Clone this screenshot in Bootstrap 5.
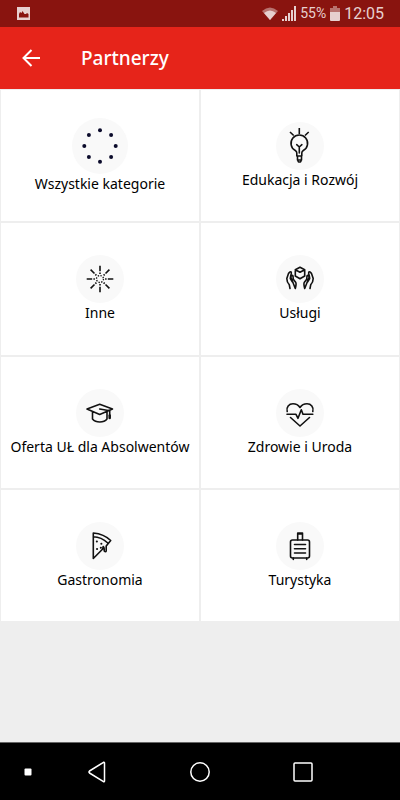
<!DOCTYPE html>
<html lang="pl">
<head>
<meta charset="utf-8">
<meta name="viewport" content="width=device-width, initial-scale=1">
<title>Partnerzy</title>
<link href="https://cdn.jsdelivr.net/npm/bootstrap@5.3.0/dist/css/bootstrap.min.css" rel="stylesheet">
<style>
body { background: #eee; font-family: "Noto Sans", "Open Sans", sans-serif; }
svg { display: block; flex: none; }
.status { background: #89140f; color: #e7d0cf; height: 27px; font: 14px/27px Roboto, sans-serif; padding: 0 16px; }
.status .clock { font-size: 16px; }
.topbar { background: #e6241a; height: 62px; padding: 0 18px; }
.topbar h1 { font-size: 19px; line-height: 28px; font-weight: 500; margin-left: 37px; }
.tile-cell { aspect-ratio: 3 / 2; padding: 1px; }
.tile { background: #fff; color: #000; font-size: 14px; line-height: 19px; }
.tile svg { fill: none; stroke: #111; stroke-width: 1.6; stroke-linecap: round; stroke-linejoin: round; }
.disc { fill: #f9f9f9; stroke: none; }
.solid { fill: #0b0b2b; stroke: none; }
.sysnav { background: #000; border-top: 1px solid #666; height: 58px; padding: 0 46px 0 10px; }
.sysnav .edge { width: 36px; }
.sysnav svg { fill: none; stroke: #fff; stroke-width: 1.5; stroke-linejoin: round; }
</style>
<script src="https://cdn.jsdelivr.net/npm/bootstrap@5.3.0/dist/js/bootstrap.bundle.min.js"></script>
</head>
<body class="d-flex flex-column min-vh-100">
<div class="status d-flex align-items-center">
  <svg width="14" height="14" viewBox="0 0 14 14" class="me-auto"><path fill="#e7d0cf" fill-rule="evenodd" d="M1 0h13v13H1zM3 10.500h9.500V7l-1.500-1-1 1-1.500 0-2-3-1 2L4 5 3 7z"/></svg>
  <svg width="16" height="14" viewBox="0 0 16 14"><path fill="#b8736f" d="M0 4Q8-3 16 4L8 13z"/><path fill="#e7d0cf" d="M2 6Q8 1 14 6L8 13z"/></svg>
  <svg class="ms-1" width="14" height="15" viewBox="0 0 14 15" fill="#e7d0cf"><path d="M0 15v-2h2v2zM3 15v-5h2v5zM6 15V7h2v8zM9 15V4h2v11zM12 15V0h2v15z"/></svg>
  <span class="ms-1 me-1">55%</span>
  <svg width="10" height="15" viewBox="0 0 10 15"><path fill="#b8736f" d="M3 0h4v2h3v5H0V2h3z"/><path fill="#e7d0cf" d="M0 6h10v8q0 1-1 1H1q-1 0-1-1z"/></svg>
  <span class="clock ms-1">12:05</span>
</div>
<header class="topbar d-flex align-items-center text-white">
  <button type="button" class="btn p-0 border-0 text-white" aria-label="Wstecz">
    <svg width="26" height="26" viewBox="0 0 26 26" fill="none" stroke="currentColor" stroke-width="2"><path d="M22 13H6M13.500 5 5.500 13l8 8"/></svg>
  </button>
  <h1 class="mb-0">Partnerzy</h1>
</header>
<main class="flex-grow-1">
  <div class="row row-cols-2 g-0">
    <div class="col tile-cell"><a href="#" class="tile d-flex flex-column align-items-center justify-content-center h-100 text-decoration-none">
      <svg width="56" height="56" viewBox="0 0 56 56"><circle class="disc" cx="28" cy="28" r="28"/><g class="solid"><circle cx="28" cy="12.300" r="2"/><circle cx="39.100" cy="16.900" r="2"/><circle cx="43.700" cy="28" r="2"/><circle cx="39.100" cy="39.100" r="2"/><circle cx="28" cy="43.700" r="2"/><circle cx="16.900" cy="39.100" r="2"/><circle cx="12.300" cy="28" r="2"/><circle cx="16.900" cy="16.900" r="2"/></g></svg>
      <span>Wszystkie kategorie</span></a></div>
    <div class="col tile-cell"><a href="#" class="tile d-flex flex-column align-items-center justify-content-center h-100 text-decoration-none">
      <svg width="48" height="48" viewBox="0 0 48 48"><circle class="disc" cx="24" cy="24" r="24"/><path stroke-linecap="butt" d="M23.300 6v6M14 10l3.700 3.500M32.700 10 29 13.500"/><path d="M20.800 34v-3q0-1.500-1.500-2.500a8.300 8.300 0 1 1 8 0q-1.500 1-1.500 2.500v3zM21.500 34v4l1 2h2l1-2v-4M21.500 38h4M23.300 31v-6l-2.600-2.300M23.300 25l2.600-2.300"/></svg>
      <span>Edukacja i Rozwój</span></a></div>
    <div class="col tile-cell"><a href="#" class="tile d-flex flex-column align-items-center justify-content-center h-100 text-decoration-none">
      <svg width="48" height="48" viewBox="0 0 48 48"><circle class="disc" cx="24" cy="24" r="24"/><g stroke-linecap="butt"><path stroke-dasharray="5.500 1.200 1.500 9" d="M24 10.700v10M24 37.300v-10M10.700 24h10M37.300 24h-10M14.600 14.600l7 7M33.400 14.600l-7 7M14.600 33.400l7-7M33.400 33.400l-7-7"/><circle cx="24" cy="24" r="3.500" stroke-dasharray="1.400 1.350" stroke-width="1.300"/></g></svg>
      <span>Inne</span></a></div>
    <div class="col tile-cell"><a href="#" class="tile d-flex flex-column align-items-center justify-content-center h-100 text-decoration-none">
      <svg width="48" height="48" viewBox="0 0 48 48"><circle class="disc" cx="24" cy="24" r="24"/><path d="M24 12.300l4.700 2.500v6.200L24 23.700 19.300 21v-6.200zM19.300 14.800 24 17.300l4.700-2.500"/><path id="hand" d="M14 33.500l-.7-3.700Q10.800 27 10.800 23.500l1.700-5Q14 16 15.300 17.200q.3.800-.5 3.300l-.5 3 2.200 3.500M14.800 22q1.200-2.500 2.200-1l.3 3.300 2.500 3.200q.7 1.500-.5 6z"/><use href="#hand" transform="translate(48 0) scale(-1 1)"/></svg>
      <span>Usługi</span></a></div>
    <div class="col tile-cell"><a href="#" class="tile d-flex flex-column align-items-center justify-content-center h-100 text-decoration-none">
      <svg width="48" height="48" viewBox="0 0 48 48"><circle class="disc" cx="24" cy="24" r="24"/><path d="M11 20l12.700-4.700L36.500 20l-12.800 5.500zM16.500 22.700V30q2.500 3 7.300 3t7.200-3v-7M23.700 20l10 1.800V27"/><path d="M33.700 26.500v2.500" stroke-width="2.500"/></svg>
      <span>Oferta UŁ dla Absolwentów</span></a></div>
    <div class="col tile-cell"><a href="#" class="tile d-flex flex-column align-items-center justify-content-center h-100 text-decoration-none">
      <svg width="48" height="48" viewBox="0 0 48 48"><circle class="disc" cx="24" cy="24" r="24"/><path d="M11.200 22.500C10 18 13 14.800 17 14.800q4.500 0 7 3.700 2.500-3.700 7-3.700c4 0 7 3.200 5.800 7.700M11 25.300h9l2 4 3.300-8.500L27 25.300h9.800M14.500 28.500 24 37l9.500-8.500"/></svg>
      <span>Zdrowie i Uroda</span></a></div>
    <div class="col tile-cell"><a href="#" class="tile d-flex flex-column align-items-center justify-content-center h-100 text-decoration-none">
      <svg width="48" height="48" viewBox="0 0 48 48"><circle class="disc" cx="24" cy="24" r="24"/><path d="M17.300 11v25.500l9.400-9.500.5-2.500q1 .5 1 2.500v2q1.500 1.500 2 0v-5l4.500-5.500Q28 12 17.300 11zM17.300 14.800q8 .2 14.500 6.200"/><path stroke-width="2" d="M20.800 19.500h.1M25.300 21.700h.1M21 27h.1M24.800 25.800h.1"/></svg>
      <span>Gastronomia</span></a></div>
    <div class="col tile-cell"><a href="#" class="tile d-flex flex-column align-items-center justify-content-center h-100 text-decoration-none">
      <svg width="48" height="48" viewBox="0 0 48 48"><circle class="disc" cx="24" cy="24" r="24"/><rect x="14.500" y="18" width="19" height="18" rx="2"/><path d="M18.500 22.500h11M18.500 26.800h11M18.500 31h11M21.700 18v-7h4.800v7M21.700 12h4.800M17.300 36v1.500M30.700 36v1.500"/></svg>
      <span>Turystyka</span></a></div>
  </div>
</main>
<nav class="sysnav d-flex align-items-center" aria-label="System">
  <button type="button" class="edge btn p-0 border-0 d-flex justify-content-center" aria-label="Pasek"><svg width="8" height="22" viewBox="0 0 8 22"><rect x=".5" y="7.500" width="7" height="7" rx="1" fill="#fff" stroke="none"/></svg></button>
  <div class="row g-0 flex-grow-1">
    <button type="button" class="col btn p-0 border-0 d-flex justify-content-center" aria-label="Wstecz"><svg width="20" height="22" viewBox="0 0 20 22"><path d="M17.500 2v18q0 1-1 .7L2.500 12q-1-1 0-2l14-8.700q1-.3 1 .7z"/></svg></button>
    <button type="button" class="col btn p-0 border-0 d-flex justify-content-center" aria-label="Ekran główny"><svg width="22" height="22" viewBox="0 0 22 22"><circle cx="11" cy="11" r="9.200"/></svg></button>
    <button type="button" class="col btn p-0 border-0 d-flex justify-content-center" aria-label="Ostatnie"><svg width="22" height="22" viewBox="0 0 22 22"><rect x="2" y="2" width="18" height="18" rx="1"/></svg></button>
  </div>
</nav>
</body>
</html>
